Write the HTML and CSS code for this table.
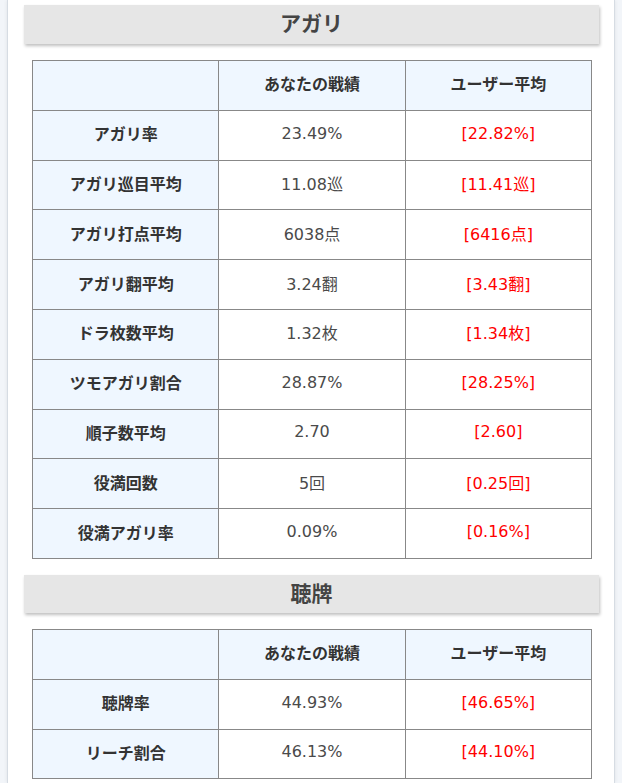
FILE: index.html
```html
<!DOCTYPE html>
<html lang="ja">
<head>
<meta charset="utf-8">
<link rel="stylesheet" href="styles.css">
</head>
<body>
<div class="page">
  <h2 class="heading">アガリ</h2>
  <table class="stats">
    <tr><th class="label"></th><th>あなたの戦績</th><th>ユーザー平均</th></tr>
    <tr><th class="label">アガリ率</th><td>23.49%</td><td class="avg">[22.82%]</td></tr>
    <tr><th class="label">アガリ巡目平均</th><td>11.08巡</td><td class="avg">[11.41巡]</td></tr>
    <tr><th class="label">アガリ打点平均</th><td>6038点</td><td class="avg">[6416点]</td></tr>
    <tr><th class="label">アガリ翻平均</th><td>3.24翻</td><td class="avg">[3.43翻]</td></tr>
    <tr><th class="label">ドラ枚数平均</th><td>1.32枚</td><td class="avg">[1.34枚]</td></tr>
    <tr><th class="label">ツモアガリ割合</th><td>28.87%</td><td class="avg">[28.25%]</td></tr>
    <tr><th class="label">順子数平均</th><td>2.70</td><td class="avg">[2.60]</td></tr>
    <tr><th class="label">役満回数</th><td>5回</td><td class="avg">[0.25回]</td></tr>
    <tr><th class="label">役満アガリ率</th><td>0.09%</td><td class="avg">[0.16%]</td></tr>
  </table>
  <h2 class="heading heading-second">聴牌</h2>
  <table class="stats">
    <tr><th class="label"></th><th>あなたの戦績</th><th>ユーザー平均</th></tr>
    <tr><th class="label">聴牌率</th><td>44.93%</td><td class="avg">[46.65%]</td></tr>
    <tr><th class="label">リーチ割合</th><td>46.13%</td><td class="avg">[44.10%]</td></tr>
  </table>
</div>
</body>
</html>
```

FILE: styles.css
```css
html, body {
  margin: 0;
  padding: 0;
}
body {
  background: #f2f5f9;
  font-family: "DejaVu Sans", "Noto Sans CJK JP", sans-serif;
  color: #444;
  height: 783px;
  overflow: hidden;
}
.page {
  margin-left: 7px;
  width: 608px;
  min-height: 783px;
  box-sizing: border-box;
  background: #fff;
  border-left: 1px solid #d6dce3;
  border-right: 1px solid #d6dce3;
  box-shadow: 0 0 4px rgba(0, 0, 0, 0.08);
  padding: 5px 15px 0 16px;
}
.heading {
  margin: 0;
  height: 39px;
  line-height: 35px;
  padding-bottom: 4px;
  box-sizing: border-box;
  background: #e6e6e6;
  text-align: center;
  font-size: 21px;
  font-weight: bold;
  color: #444;
  box-shadow: 1px 2px 3px rgba(0, 0, 0, 0.25);
  font-family: "Noto Sans CJK JP", sans-serif;
}
.heading-second {
  margin-top: 16px;
  height: 38px;
  line-height: 34px;
}
.stats {
  margin: 16px 8px 0 8px;
  width: 560px;
  border-collapse: collapse;
  table-layout: fixed;
  font-size: 16px;
}
.stats th, .stats td {
  border: 1px solid #888;
  height: 44.8px;
  padding: 0 0 4px 0;
  text-align: center;
  vertical-align: middle;
}
.stats th {
  font-weight: bold;
  color: #333;
  background: #eff7ff;
  font-family: "Noto Sans CJK JP", sans-serif;
  font-size: 16px;
}
.stats td {
  color: #4a4a4a;
  font-weight: normal;
}
.stats td.avg {
  color: #ff0000;
}
```
